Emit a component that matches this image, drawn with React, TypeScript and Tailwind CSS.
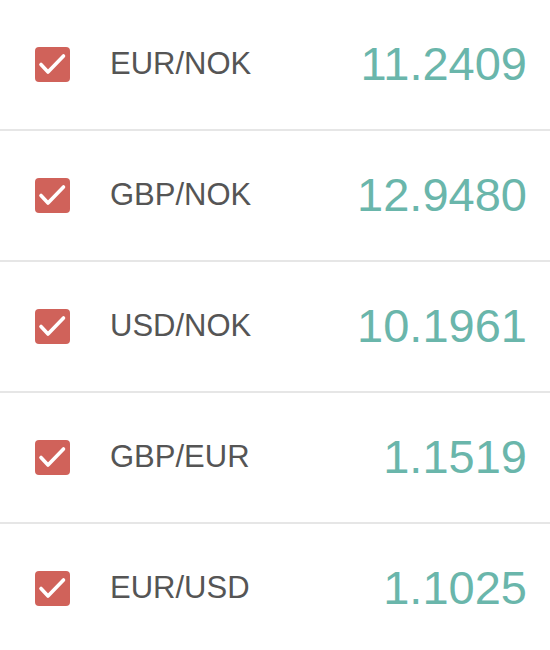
const rates = [
  { pair: "EUR/NOK", value: "11.2409" },
  { pair: "GBP/NOK", value: "12.9480" },
  { pair: "USD/NOK", value: "10.1961" },
  { pair: "GBP/EUR", value: "1.1519" },
  { pair: "EUR/USD", value: "1.1025" },
]

function CheckBox() {
  return (
    <div className="h-[35px] w-[35px] shrink-0 rounded-[4px] bg-[#d0625a]">
      <svg className="block h-[35px] w-[35px]" viewBox="0 0 35 35" fill="none">
        <path d="M6 17.5l7 7.5L28.5 9" stroke="#fff" strokeWidth="3.6" strokeLinecap="round" strokeLinejoin="round" />
      </svg>
    </div>
  )
}

export default function App() {
  return (
    <main className="h-[650px] w-[550px] overflow-hidden bg-white" style={{ fontFamily: '"Liberation Sans", Arial, sans-serif' }}>
      {rates.map((rate) => (
        <div
          key={rate.pair}
          className="flex h-[131px] items-center border-b-2 border-[#e6e6e6] pl-[35px] pr-[23px]"
        >
          <CheckBox />
          <span className="ml-[40px] text-[31px] text-[#555555]">{rate.pair}</span>
          <span className="ml-auto text-[47px] text-[#6ab6ab]">{rate.value}</span>
        </div>
      ))}
    </main>
  )
}
